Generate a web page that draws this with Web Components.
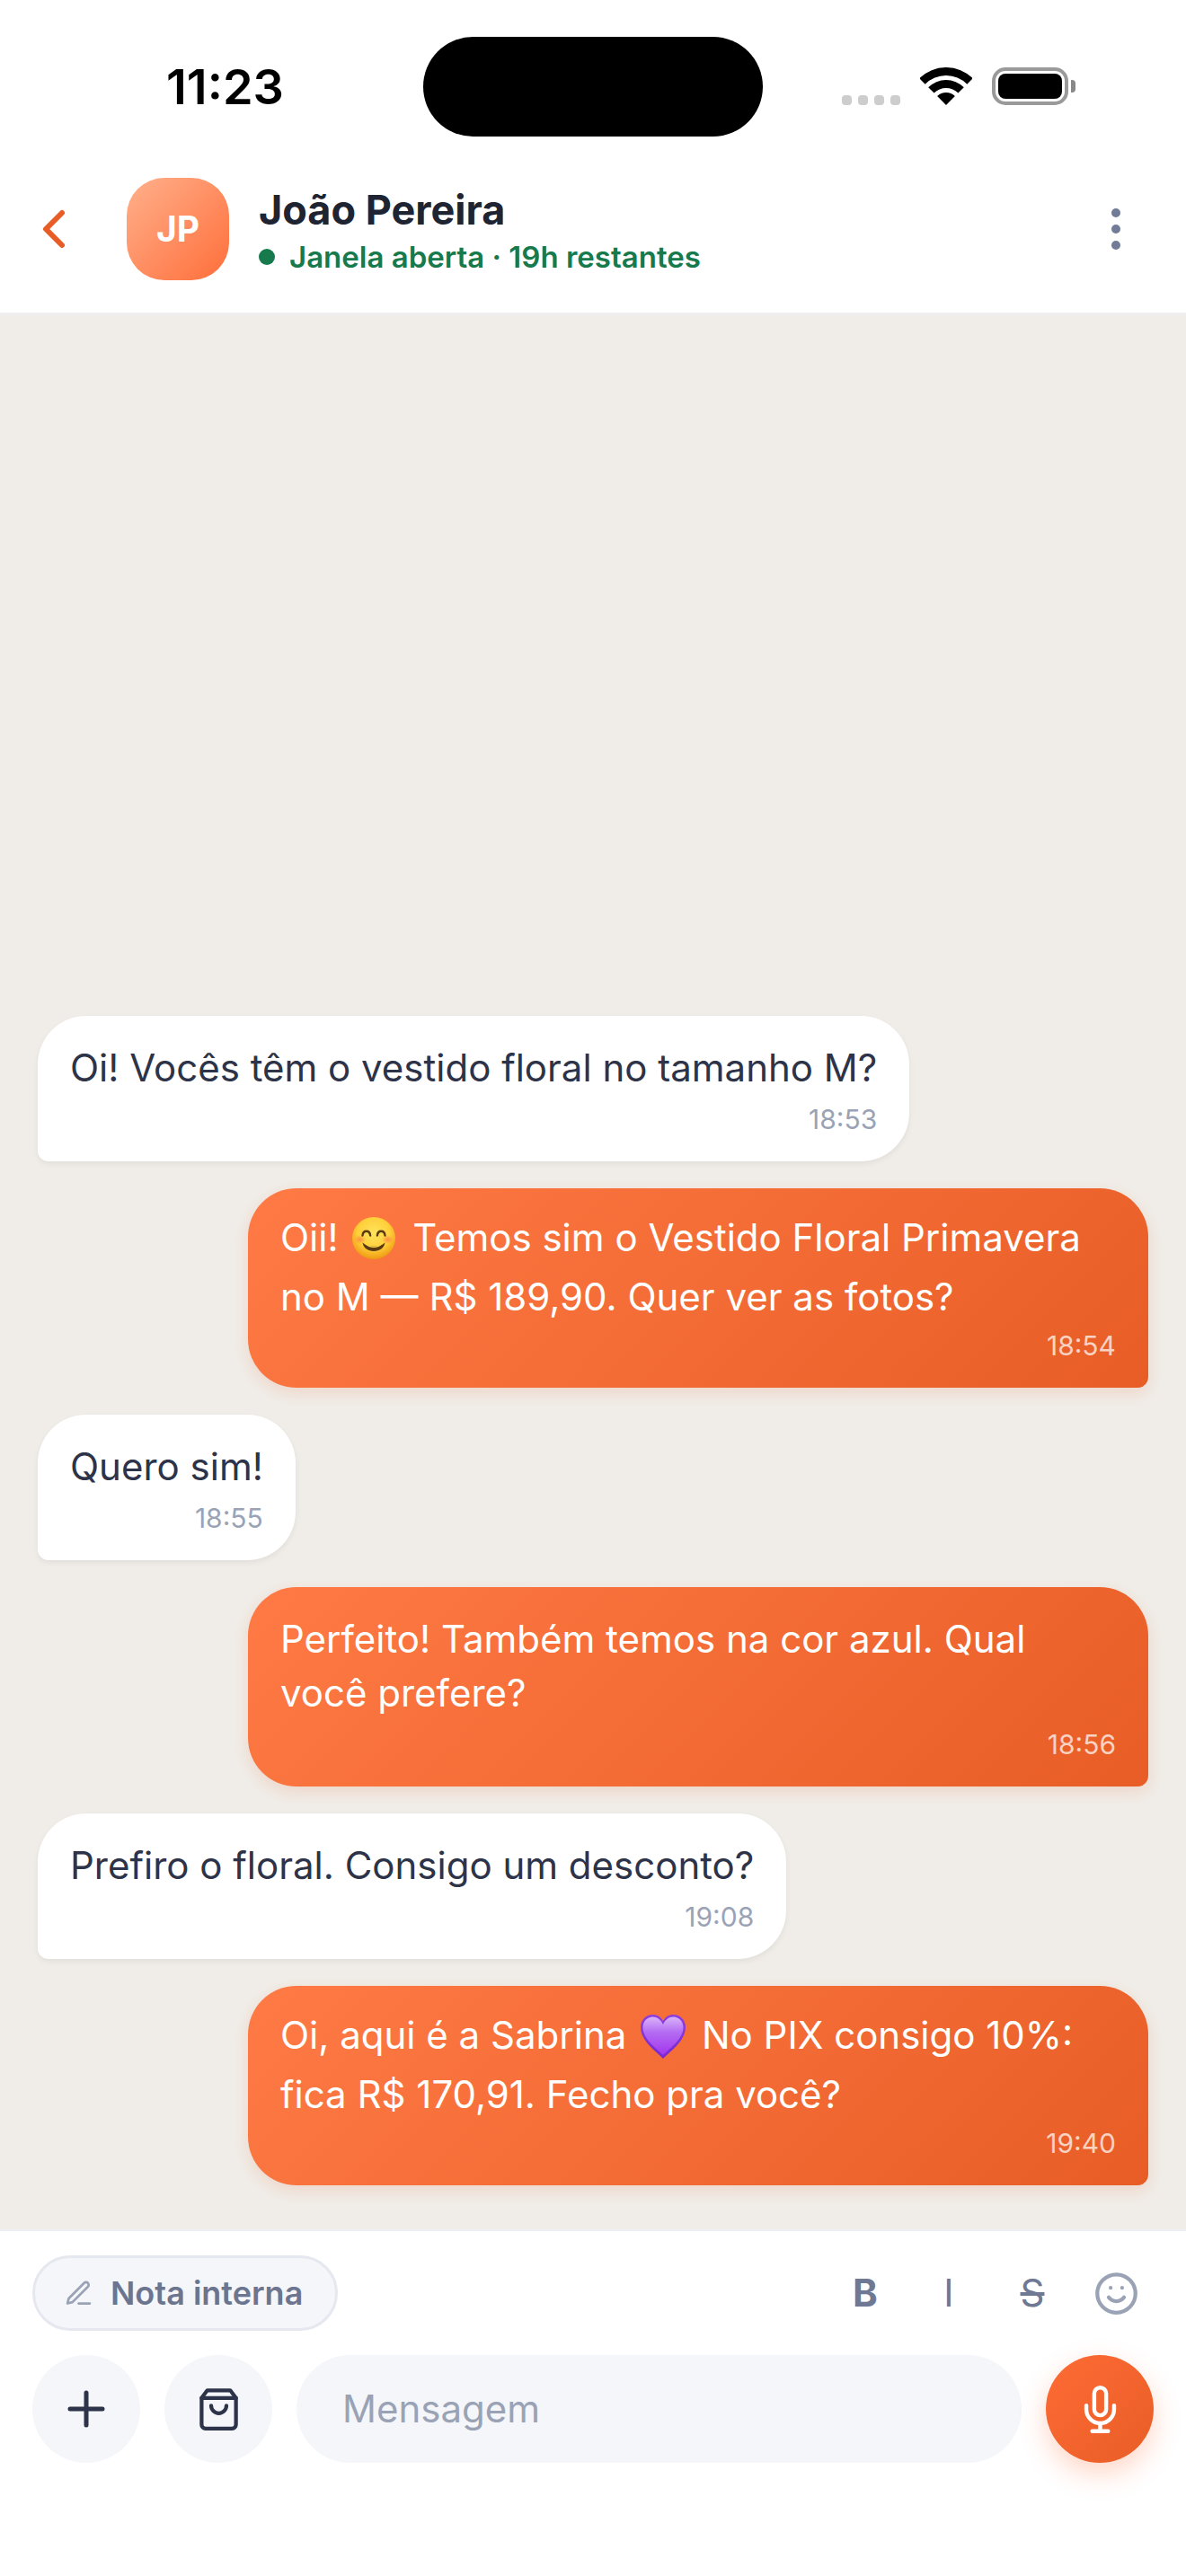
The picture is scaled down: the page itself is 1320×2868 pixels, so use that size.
<!DOCTYPE html>
<html lang="pt-BR">
<head>
<meta charset="utf-8">
<title>Conversa</title>
<style>
html,body{margin:0;padding:0;background:#fff}
body{font-family:Inter,"Liberation Sans",sans-serif}
</style>
</head>
<body>
<chat-app>
  <status-bar slot="status"></status-bar>
  <chat-header slot="header" initials="JP" name="João Pereira" status="Janela aberta · 19h restantes"></chat-header>
  <chat-bubble kind="in" time="18:53">Oi! Vocês têm o vestido floral no tamanho M?</chat-bubble>
  <chat-bubble kind="out" time="18:54" emoji>Oii! <emoji-smile></emoji-smile> Temos sim o Vestido Floral Primavera no M — R$ 189,90. Quer ver as fotos?</chat-bubble>
  <chat-bubble kind="in" time="18:55">Quero sim!</chat-bubble>
  <chat-bubble kind="out" time="18:56">Perfeito! Também temos na cor azul. Qual você prefere?</chat-bubble>
  <chat-bubble kind="in" time="19:08">Prefiro o floral. Consigo um desconto?</chat-bubble>
  <chat-bubble kind="out" time="19:40" emoji>Oi, aqui é a Sabrina <emoji-heart></emoji-heart> No PIX consigo 10%: fica R$ 170,91. Fecho pra você?</chat-bubble>
  <chat-composer slot="composer"></chat-composer>
</chat-app>
<script>
function define(name, html, init){
  customElements.define(name, class extends HTMLElement{
    constructor(){super();this.attachShadow({mode:'open'}).innerHTML=html;}
    connectedCallback(){ if(init) init.call(this,this.shadowRoot); }
  });
}
define('chat-app',`<style>
:host{display:flex;flex-direction:column;width:1320px;height:2868px;background:#fff;font-family:Inter,"Liberation Sans",sans-serif;overflow:hidden}
.chat{flex:1;min-height:0;background:#F0EDE8;display:flex;flex-direction:column;justify-content:flex-end;gap:30px;padding:0 42px 49px}
</style>
<slot name="status"></slot><slot name="header"></slot>
<div class="chat"><slot></slot></div>
<slot name="composer"></slot>`);

define('status-bar',`<style>
:host{display:grid;grid-template-columns:471px 378px 1fr;height:186px;box-sizing:border-box;padding-top:41px;align-items:start}
.time{padding-left:185px;padding-top:26px;font:600 54px/60px Inter,sans-serif;color:#000}
.notch{height:111px;background:#000;border-radius:56px}
.right{display:flex;align-items:flex-end;padding:34px 0 0 88px;height:42px}
.sig{display:flex;gap:7px}
.sig i{width:11px;height:11px;border-radius:4px;background:#cdcdcd}
.wifi{display:block;margin-left:22px;width:58px;height:42px}
.bat{margin-left:22px;width:85px;height:42px;box-sizing:border-box;border:4.5px solid #9a9a9a;border-radius:15px;padding:3px;display:flex}
.bat b{flex:1;background:#000;border-radius:8px}
.cap{width:5px;height:14px;background:#888;border-radius:0 4px 4px 0;margin:0 0 14px 3px}
</style>
<div class="time">11:23</div><div class="notch"></div>
<div class="right"><div class="sig"><i></i><i></i><i></i><i></i></div>
<svg class="wifi" viewBox="0 0 58 42"><path d="M-0.7 12.3A42 42 0 0 1 58.7 12.3L52.3 18.7A33 33 0 0 0 5.7 18.7Z M9.2 22.2A28 28 0 0 1 48.8 22.2L42.4 28.6A19 19 0 0 0 15.6 28.6Z M19.1 32.1A14 14 0 0 1 38.9 32.1L29 42Z" fill="#000"/></svg>
<div class="bat"><b></b></div><div class="cap"></div></div>`);

define('chat-header',`<style>
:host{display:flex;align-items:center;box-sizing:border-box;height:165px;padding:12px 0 36px 24px;background:#fff;border-bottom:3px solid #EFEFF2}
.back{display:block;width:72px;height:72px;fill:none;stroke:#E85D26;stroke-width:2;stroke-linecap:round;stroke-linejoin:round;flex:none}
.av{flex:none;margin-left:45px;width:114px;height:114px;border-radius:42px;background:linear-gradient(135deg,#FFB08C,#FF6E3A);color:#fff;font:700 39px/114px Inter,sans-serif;text-align:center}
.txt{flex:1;margin-left:33px;min-width:0;align-self:flex-start;padding-top:9px}
.name{font:700 45px/54px Inter,sans-serif;color:#1F2433}
.st{display:flex;align-items:center;gap:16px;margin-top:4px;font:600 33px/42px Inter,sans-serif;color:#167A4D}
.st i{width:18px;height:18px;border-radius:50%;background:#167A4D;flex:none}
.more{flex:none;width:156px;display:flex;flex-direction:column;align-items:center;gap:8px}
.more i{width:10px;height:10px;border-radius:50%;background:#727C96}
</style>
<svg class="back" viewBox="0 0 24 24"><path d="M15 18 9 12 15 6"/></svg>
<div class="av" id="a"></div>
<div class="txt"><div class="name" id="n"></div><div class="st"><i></i><span id="s"></span></div></div>
<div class="more"><i></i><i></i><i></i></div>`,function(r){
  r.getElementById('a').textContent=this.getAttribute('initials');
  r.getElementById('n').textContent=this.getAttribute('name');
  r.getElementById('s').textContent=this.getAttribute('status');
});

define('chat-bubble',`<style>
:host{display:block;box-sizing:border-box;width:fit-content;max-width:1002px;padding:28px 36px 29px;font:400 42px/60px Inter,sans-serif}
:host([kind=in]){background:#fff;color:#2D3348;border-radius:54px 54px 54px 12px;box-shadow:0 3px 6px rgba(0,0,0,.06);align-self:flex-start}
:host([kind=out]){background:linear-gradient(135deg,#FF7A45,#E85D26);color:#fff;border-radius:54px 54px 12px 54px;box-shadow:0 6px 18px rgba(232,93,38,.16);align-self:flex-end;width:1002px}
:host([emoji]) .t{line-height:66px;margin:-6px 0}
.m{font:400 30px/36px Inter,sans-serif;text-align:right;margin-top:9px;color:#9AA3B5}
:host([kind=out]) .m{color:rgba(255,255,255,.72)}
</style><div class="t"><slot></slot></div><div class="m" id="m"></div>`,function(r){
  r.getElementById('m').textContent=this.getAttribute('time');
});

define('emoji-smile',`<style>:host{display:inline-block;width:48px;height:47px;vertical-align:-9px;margin:0 7px 0 4px}svg{display:block;width:100%;height:100%}</style>
<svg viewBox="0 0 48 47"><defs>
<radialGradient id="f" cx="50%" cy="38%" r="62%"><stop offset="0" stop-color="#FFE45C"/><stop offset=".6" stop-color="#FFCF3A"/><stop offset="1" stop-color="#EE9A12"/></radialGradient>
<radialGradient id="b"><stop offset="0" stop-color="#FF7A4A" stop-opacity=".75"/><stop offset="1" stop-color="#FF7A4A" stop-opacity="0"/></radialGradient></defs>
<ellipse cx="24" cy="23.5" rx="24" ry="23.5" fill="url(#f)"/>
<ellipse cx="8.5" cy="25" rx="6.5" ry="5" fill="url(#b)"/><ellipse cx="39.5" cy="25" rx="6.5" ry="5" fill="url(#b)"/>
<path d="M11.5 20.5c.6-6.4 8-6.4 8.6 0M27.9 20.5c.6-6.4 8-6.4 8.6 0" fill="none" stroke="#5A3A12" stroke-width="2.4" stroke-linecap="round"/>
<path d="M11.5 28.5c3.5 3 7.5 4 12.5 4s9-1 12.500-4c-1 6-6 9.500-12.500 9.500s-11.500-3.500-12.500-9.500z" fill="#5A3A12"/>
<path d="M14 29.500c3 2 6 3 10 3s7-1 10-3c-3 3.500-6 4.500-10 4.500s-7-1-10-4.500z" fill="#FFD74A"/></svg>`);

define('emoji-heart',`<style>:host{display:inline-block;width:50px;height:49px;vertical-align:-11px;margin:0 6px 0 4px}svg{display:block;width:100%;height:100%}</style>
<svg viewBox="0 0 50 49"><defs>
<linearGradient id="h" x1="0" y1="0" x2="0" y2="1"><stop offset="0" stop-color="#8E3FE0"/><stop offset="1" stop-color="#7A28D0"/></linearGradient>
<linearGradient id="i" x1="0" y1="0" x2="0" y2="1"><stop offset="0" stop-color="#D9B4FA"/><stop offset=".4" stop-color="#B46CF2"/><stop offset="1" stop-color="#A435EE"/></linearGradient></defs>
<path d="M25 49C16 40 0 29 0 14 0 6 6 0 13.500 0 18.500 0 22.500 2.500 25 7 27.500 2.500 31.500 0 36.500 0 44 0 50 6 50 14 50 29 34 40 25 49Z" fill="url(#h)"/>
<path d="M25 45C17 37 2.500 27 2.500 14 2.500 7.500 7.500 2.500 13.500 2.500 18.500 2.500 22.500 5.500 25 11 27.500 5.500 31.500 2.500 36.500 2.500 42.500 2.500 47.500 7.500 47.500 14 47.500 27 33 37 25 45Z" fill="url(#i)"/></svg>`);

define('chat-composer',`<style>
:host{display:block;box-sizing:border-box;height:386px;background:#fff;border-top:2px solid #EEEFF3;padding:27px 36px 0}
.top{display:flex;align-items:center;justify-content:space-between;height:84px}
.chip{display:flex;align-items:center;box-sizing:border-box;height:84px;border:3px solid #E5E8EF;border-radius:42px;background:#F5F6FA;padding:0 36px 0 32px;font:600 36px/1 Inter,sans-serif;color:#6B7590}
.chip svg{width:33px;height:33px;margin-right:19px;fill:none;stroke:#9AA3B5;stroke-width:2;stroke-linecap:round;stroke-linejoin:round}
.fmt{display:flex;gap:9px;color:#6F7993}
.fmt span{width:84px;height:84px;display:flex;align-items:center;justify-content:center;font:400 42px/1 Inter,sans-serif}
.fmt .b{font-weight:700}.fmt .s{text-decoration:line-through}
.fmt svg{width:51px;height:51px;fill:none;stroke:#9AA3B5;stroke-width:2;stroke-linecap:round;stroke-linejoin:round}
.row{display:flex;align-items:center;gap:27px;margin-top:27px}
.btn{flex:none;width:120px;height:120px;border-radius:50%;background:#F5F6FA;display:flex;align-items:center;justify-content:center}
.btn svg{fill:none;stroke:#2D3348;stroke-width:2;stroke-linecap:round;stroke-linejoin:round}
.input{flex:1;height:120px;border-radius:60px;background:#F5F6FA;box-sizing:border-box;padding-left:51px;display:flex;align-items:center;font:400 42px/1 Inter,sans-serif;color:#9AA3B5}
.mic{background:linear-gradient(135deg,#FF6B35,#E85D26);box-shadow:0 12px 30px rgba(255,107,53,.28)}
.mic svg{stroke:#fff}
</style>
<div class="top"><div class="chip"><svg viewBox="0 0 24 24"><path d="M12 20h9"/><path d="M16.500 3.500a2.121 2.121 0 0 1 3 3L7 19l-4 1 1-4L16.500 3.500z"/></svg>Nota interna</div>
<div class="fmt"><span class="b">B</span><span>I</span><span class="s">S</span><span><svg viewBox="0 0 24 24"><circle cx="12" cy="12" r="10"/><path d="M8 14s1.500 2 4 2 4-2 4-2"/><path d="M9 9h.01M15 9h.01"/></svg></span></div></div>
<div class="row">
<div class="btn"><svg width="48" height="48" viewBox="0 0 24 24" style="stroke-width:2.500"><path d="M12 3v18M3 12h18"/></svg></div>
<div class="btn"><svg width="51" height="51" viewBox="0 0 24 24"><path d="M6 2 3 6v14a2 2 0 0 0 2 2h14a2 2 0 0 0 2-2V6l-3-4z"/><path d="M3 6h18"/><path d="M16 10a4 4 0 0 1-8 0"/></svg></div>
<div class="input">Mensagem</div>
<div class="btn mic"><svg width="53" height="53" viewBox="0 0 24 24"><path d="M12 1a3 3 0 0 0-3 3v8a3 3 0 0 0 6 0V4a3 3 0 0 0-3-3z"/><path d="M19 10v2a7 7 0 0 1-14 0v-2"/><path d="M12 19v4M8 23h8"/></svg></div>
</div>`);
</script>
</body>
</html>
